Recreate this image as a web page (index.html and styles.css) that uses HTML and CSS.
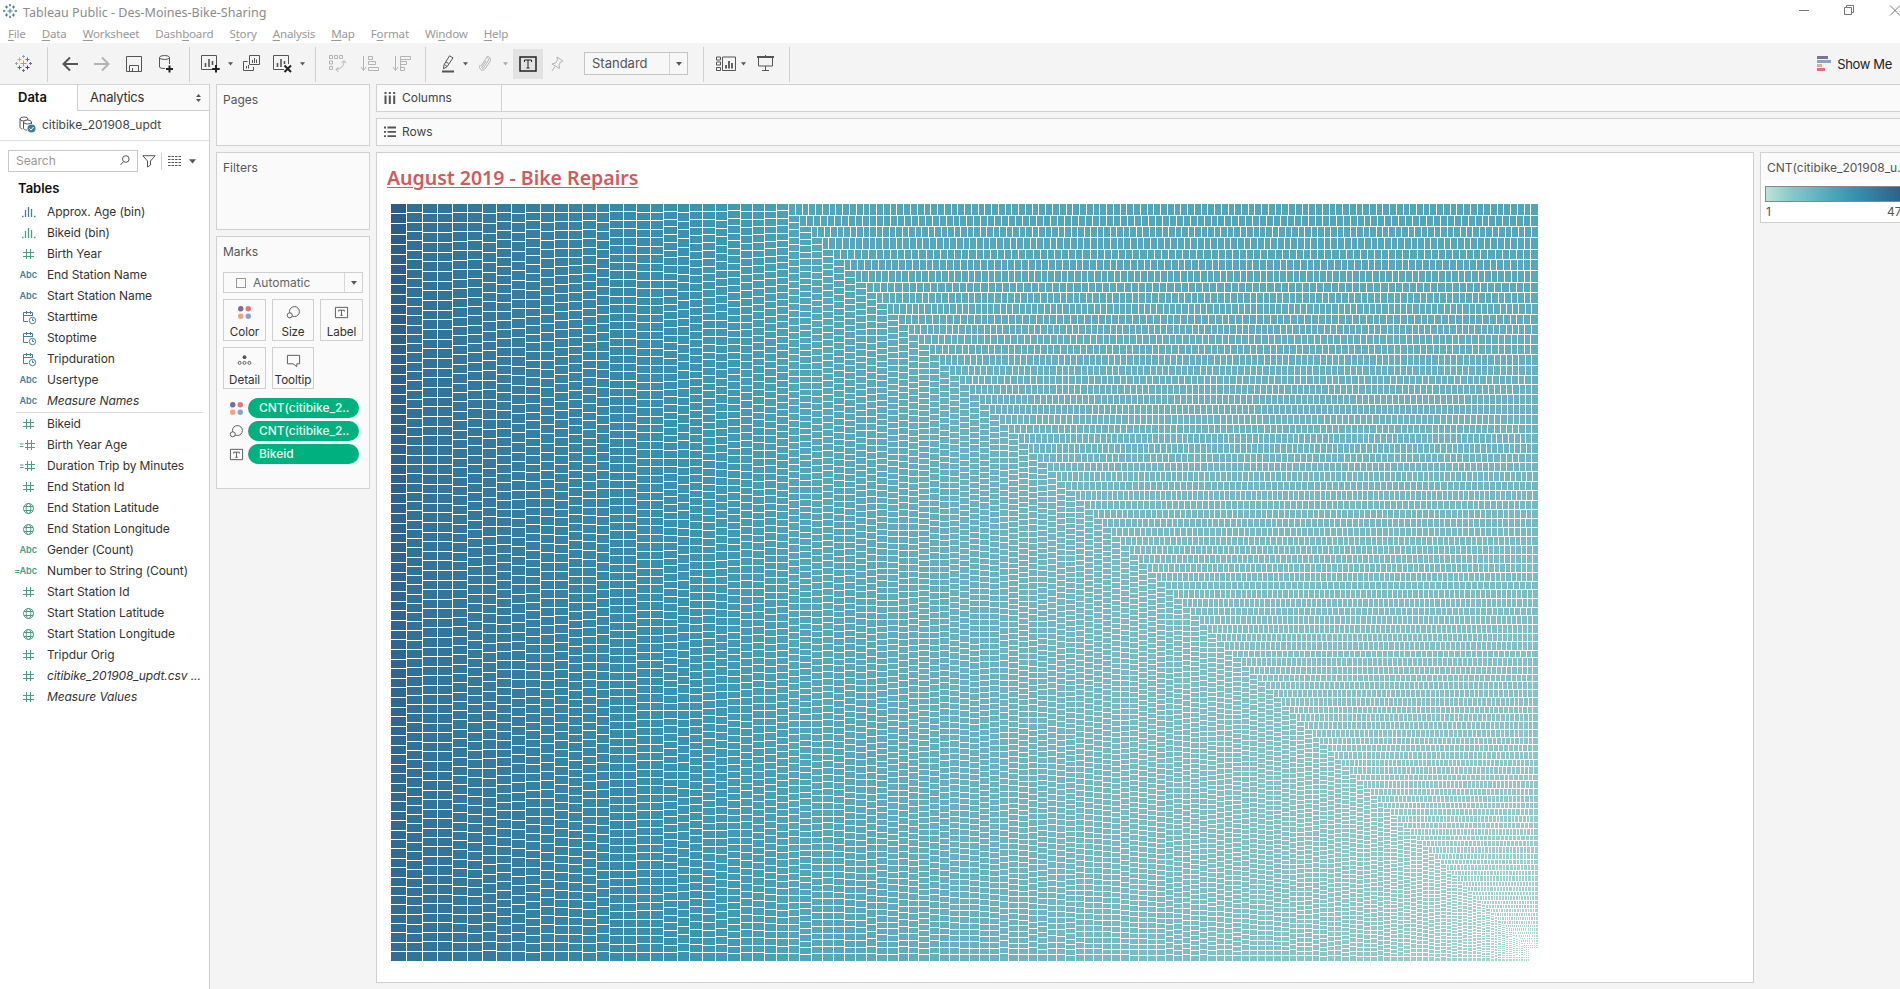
FILE: index.html
```html
<!DOCTYPE html>
<html lang="en">
<head>
<meta charset="utf-8">
<title>Tableau Public - Des-Moines-Bike-Sharing</title>
<link rel="stylesheet" href="styles.css">
</head>
<body>
<svg class="defs" width="0" height="0" aria-hidden="true">
  <symbol id="i-hash" viewBox="0 0 18 14"><path d="M6.500 2v10M10.500 2v10M3 5.500h11M3 9.500h11"/></symbol>
  <symbol id="i-eqhash" viewBox="0 0 18 14"><path d="M7.500 2v10M11.500 2v10M5 5.500h10M5 9.500h10M0 6h3.500M0 8.500h3.500"/></symbol>
  <symbol id="i-bin" viewBox="0 0 18 14"><path d="M5.500 5v7M8.500 2v10M11.500 4v8M2 11.500h1.500M14 11.500h1.500" stroke-width="1.300"/></symbol>
  <symbol id="i-date" viewBox="0 0 18 14"><path d="M8 11.500H3.500v-9h9V6M3.500 5.500h9M6.500 1v3M10.500 1v3"/><circle cx="12.500" cy="10.500" r="3.200"/><path d="M12.500 8.500v2h1.500"/></symbol>
  <symbol id="i-globe" viewBox="0 0 18 14"><circle cx="8.500" cy="7.500" r="5"/><ellipse cx="8.500" cy="7.500" rx="2.300" ry="5"/><path d="M4 5.500h9M4 9.500h9"/></symbol>
  <symbol id="i-caret" viewBox="0 0 6 4"><path d="M0 0h6L3 3.800z" fill="currentColor" stroke="none"/></symbol>
  <symbol id="i-size" viewBox="0 0 16 16"><circle cx="9" cy="7" r="5.300"/><circle cx="4" cy="11" r="2.700" fill="#fafafa"/></symbol>
  <symbol id="i-color" viewBox="0 0 16 16"><g stroke="none"><circle cx="4" cy="4" r="2.900" fill="#7f6a93"/><circle cx="12" cy="4" r="2.900" fill="#e2767d"/><circle cx="4" cy="12" r="2.900" fill="#eda283"/><circle cx="12" cy="12" r="2.900" fill="#8ba2c4"/></g></symbol>
  <symbol id="i-text" viewBox="0 0 16 16"><path d="M1.500 2.500h13v11h-13zM5 7V5.500h6V7M8 5.500v5.500M6.800 11h2.400"/></symbol>
</svg>

<header class="titlebar">
  <svg class="app-icon" width="16" height="16" viewBox="0 0 16 16"><path d="M8 5.500v5M5.500 8h5M4.500 2.500v3M3 4h3M11.500 2.500v3M10 4h3M4.500 10.500v3M3 12h3M11.500 10.500v3M10 12h3M8 1v2.500M7 2h2M8 12.500V15M7 14h2M1 8h2.500M2 7v2M12.500 8H15M14 7v2"/></svg>
  <span class="app-title">Tableau Public - Des-Moines-Bike-Sharing</span>
  <svg class="win" width="112" height="14" viewBox="0 0 112 14"><path d="M11 6.500h10M56.500 3.500h7v7h-7zM58.500 3V1.500h7v7h-2M102 1.500l10 10M112 1.500l-10 10"/></svg>
</header>
<nav class="menu">
  <span><u>F</u>ile</span><span><u>D</u>ata</span><span><u>W</u>orksheet</span><span>Dash<u>b</u>oard</span><span>S<u>t</u>ory</span><span><u>A</u>nalysis</span><span><u>M</u>ap</span><span>F<u>o</u>rmat</span><span>Wi<u>n</u>dow</span><span><u>H</u>elp</span>
</nav>

<div class="toolbar">
  <svg class="ml15" width="17" height="17" viewBox="0 0 17 17"><path d="M8.500 5.500v6M5.500 8.500h6" stroke="#e58b4a"/><path d="M4.500 2.500v4M2.500 4.500h4" stroke="#e0a070"/><path d="M12.500 2.500v4M10.500 4.500h4" stroke="#5b7591"/><path d="M4.500 10.500v4M2.500 12.500h4" stroke="#b8434a"/><path d="M12.500 10.500v4M10.500 12.500h4" stroke="#34456e"/><path d="M8.500 0v3M7 1.500h3M0 8.500h3M1.500 7v3" stroke="#8faab5"/><path d="M8.500 14v3M7 15.500h3M14 8.500h3M15.500 7v3" stroke="#6a6f9b"/></svg>
  <i class="sep ml15"></i>
  <svg class="ml14 heavy" width="16" height="16" viewBox="0 0 16 16"><path d="M16 8H1.500M8 1.500L1.500 8 8 14.500"/></svg>
  <svg class="ml16 heavy dim" width="16" height="16" viewBox="0 0 16 16"><path d="M0 8h14.500M8 1.500L14.500 8 8 14.500"/></svg>
  <svg class="ml16" width="16" height="16" viewBox="0 0 16 16"><path d="M.5.500h15v15H.5zM3.500 15.500v-6h9v6M6.500 12v3.500"/></svg>
  <svg class="ml17" width="14" height="18" viewBox="0 0 14 18"><path d="M6 13.500C3 13.500.5 13 .5 12V2.500M10.500 2.500V9"/><ellipse cx="5.500" cy="2.500" rx="5" ry="2"/><path d="M10.500 10.500v7M7 14h7" stroke="#222" stroke-width="2"/></svg>
  <i class="sep ml16"></i>
  <svg class="ml11" width="19" height="18" viewBox="0 0 19 18"><path d="M12 14.500H.5V.5h15V10"/><path d="M4.500 8v4M8 4v8M11.500 6v4" stroke-width="1.600"/><path d="M15 10v7.500M11.200 14h7.500" stroke="#222" stroke-width="2"/></svg>
  <svg class="caret ml8"><use href="#i-caret"/></svg>
  <svg class="ml10" width="17" height="17" viewBox="0 0 17 17"><path d="M6.500.5h10v9h-10zM4.500 6.500h-4v9h10v-3.500M9.500 5v3M11.500 3v5M13.500 4.500V8M3.500 11v2.500M5.500 10v3.500"/></svg>
  <svg class="ml13" width="19" height="18" viewBox="0 0 19 18"><path d="M11 14.500H.5V.5h15V9"/><path d="M4.500 8v4M8 4v8M11.500 6v3" stroke-width="1.600"/><path d="M11.500 10.500l6.500 6.500M18 10.500L11.500 17" stroke="#222" stroke-width="2"/></svg>
  <svg class="caret ml8"><use href="#i-caret"/></svg>
  <i class="sep ml10"></i>
  <svg class="ml13 dim" width="17" height="17" viewBox="0 0 17 17"><path d="M.5.500h3v3h-3zM5.500.500h3v3h-3zM10.500.500h3v3h-3zM.5 6h3v3h-3zM.5 11.500h3v3h-3zM15 6c0 5-3 8-8 8.500M12.500 8L15 5.500 17 8M9.500 12L7 14.500 9.500 17"/></svg>
  <svg class="ml15 dim" width="18" height="16" viewBox="0 0 18 16"><path d="M2.500 0v14M0 11l2.500 3.500L5 11M7.500.5h4v3h-4zM7.500 5.500h7v3h-7zM7.500 11.500h10v3h-10z"/></svg>
  <svg class="ml14 dim" width="18" height="16" viewBox="0 0 18 16"><path d="M2.500 0v14M0 11l2.500 3.500L5 11M7.500.5h10v3h-10zM7.500 5.500h6v3h-6M7.500 3.500v11h4v-3h-4"/></svg>
  <i class="sep ml14"></i>
  <svg class="ml16" width="12" height="18" viewBox="0 0 12 18"><path d="M7.500.800l3.500 2-6 9-3.500 2 .5-4zM2.500 9.500l2.500 2M4 7l2.500 1.500"/><path d="M0 16.500h12" stroke-width="2"/></svg>
  <svg class="caret ml9"><use href="#i-caret"/></svg>
  <svg class="ml11 dim" width="12" height="16" viewBox="0 0 12 16"><path d="M2 10l5-7.500c1-1.500 3.500-.5 2.500 1.500L4.500 12c-.8 1-2 .3-1.500-1l4-6M1 9C-.5 12 2.500 16.500 6 13l5-7.500C12.500 2 9.500-1 7 1.500"/></svg>
  <svg class="caret ml12 dim"><use href="#i-caret"/></svg>
  <span class="pressed ml5"><svg width="18" height="16" viewBox="0 0 18 16"><path d="M1 1h16v14H1z" stroke="#222" stroke-width="1.500"/><path d="M5.500 6V4h7v2M9 4v8M7.500 12h3" stroke="#222"/></svg></span>
  <svg class="ml8 dim" width="13" height="16" viewBox="0 0 13 16"><path d="M6 1l6 4-1.500 1-1 0-1.500 3 .5 3.500L1 8l3.500-1 2-3zM4 10.500L1 15"/></svg>
  <span class="select ml20"><span>Standard</span><b><svg class="caret"><use href="#i-caret"/></svg></b></span>
  <i class="sep ml15"></i>
  <svg class="ml12" width="20" height="16" viewBox="0 0 20 16"><path d="M.5 1h4v3h-4zM.5 6h4v3h-4zM.5 11.500h4v3h-4zM6.500 1h13v13.500h-13z"/><path d="M10 9v3.500M13 5v7.500M16 7v5.500" stroke-width="1.800"/></svg>
  <svg class="caret ml5"><use href="#i-caret"/></svg>
  <svg class="ml11" width="17" height="17" viewBox="0 0 17 17"><path d="M0 2h17" stroke-width="2"/><path d="M8.500 0v2M1.500 3v8h14V3M8.500 11v5M5 15.500h7"/></svg>
  <i class="sep ml15"></i>
  <div class="showme">
    <svg width="14" height="16" viewBox="0 0 14 16" shape-rendering="crispEdges"><g stroke="none"><path d="M0 0h11v3H0z" fill="#7a7391"/><path d="M0 4h14v3H0z" fill="#8ea3c4"/><path d="M0 8h5v3H0z" fill="#e6a98c"/><path d="M0 12h8v3H0z" fill="#d9727b"/></g></svg>
    <span>Show Me</span>
  </div>
</div>

<main class="work">
  <aside class="pane">
    <div class="tabs"><b>Data</b><span class="tab2">Analytics<svg width="5" height="8" viewBox="0 0 5 8"><path d="M0 3h5L2.500 0zM0 5h5L2.500 8z" fill="#555" stroke="none"/></svg></span></div>
    <div class="source">
      <svg width="17" height="17" viewBox="0 0 17 17"><ellipse cx="5" cy="3" rx="4" ry="2"/><path d="M1 3v8c0 1 1 1.700 2.500 2"/><ellipse cx="8.500" cy="6" rx="4" ry="2" fill="#fff"/><path d="M4.500 6v6c0 1.500 1.500 2 3.500 2.200M12.500 6v2"/><circle cx="12.500" cy="12.500" r="4" fill="#3f7f9d" stroke="none"/><path d="M10.500 12.500l1.500 1.500 2.500-3" stroke="#fff"/></svg>
      <span>citibike_201908_updt</span>
    </div>
    <div class="searchrow">
      <div class="search"><span>Search</span><svg width="10" height="11" viewBox="0 0 10 11"><circle cx="5.800" cy="4" r="3.300"/><path d="M3.500 6.500L.5 10"/></svg></div>
      <svg width="14" height="13" viewBox="0 0 14 13"><path d="M.8.700h12.400L8.500 6v4l-3 2V6z"/></svg>
      <i class="vline"></i>
      <svg width="13" height="10" viewBox="0 0 13 10"><path d="M0 .5h13M0 3.500h13M0 6.500h13M0 9.500h13" stroke-dasharray="2.500 1"/></svg>
      <svg class="caret"><use href="#i-caret"/></svg>
    </div>
    <h2>Tables</h2>
    <ul class="fields dims">
      <li><svg><use href="#i-bin"/></svg><span>Approx. Age (bin)</span></li>
      <li class="green"><svg><use href="#i-bin"/></svg><span>Bikeid (bin)</span></li>
      <li class="green"><svg><use href="#i-hash"/></svg><span>Birth Year</span></li>
      <li><em class="abc">Abc</em><span>End Station Name</span></li>
      <li><em class="abc">Abc</em><span>Start Station Name</span></li>
      <li><svg><use href="#i-date"/></svg><span>Starttime</span></li>
      <li><svg><use href="#i-date"/></svg><span>Stoptime</span></li>
      <li><svg><use href="#i-date"/></svg><span>Tripduration</span></li>
      <li><em class="abc">Abc</em><span>Usertype</span></li>
      <li class="ital"><em class="abc">Abc</em><span>Measure Names</span></li>
    </ul>
    <ul class="fields meas">
      <li><svg><use href="#i-hash"/></svg><span>Bikeid</span></li>
      <li><svg><use href="#i-eqhash"/></svg><span>Birth Year Age</span></li>
      <li><svg><use href="#i-eqhash"/></svg><span>Duration Trip by Minutes</span></li>
      <li><svg><use href="#i-hash"/></svg><span>End Station Id</span></li>
      <li><svg><use href="#i-globe"/></svg><span>End Station Latitude</span></li>
      <li><svg><use href="#i-globe"/></svg><span>End Station Longitude</span></li>
      <li><em class="abc">Abc</em><span>Gender (Count)</span></li>
      <li><em class="abc">=Abc</em><span>Number to String (Count)</span></li>
      <li><svg><use href="#i-hash"/></svg><span>Start Station Id</span></li>
      <li><svg><use href="#i-globe"/></svg><span>Start Station Latitude</span></li>
      <li><svg><use href="#i-globe"/></svg><span>Start Station Longitude</span></li>
      <li><svg><use href="#i-hash"/></svg><span>Tripdur Orig</span></li>
      <li class="ital"><svg><use href="#i-hash"/></svg><span>citibike_201908_updt.csv ...</span></li>
      <li class="ital"><svg><use href="#i-hash"/></svg><span>Measure Values</span></li>
    </ul>
  </aside>

  <section class="cards">
    <div class="card pages">Pages</div>
    <div class="card filters">Filters</div>
    <div class="card marks">Marks
      <div class="marktype"><i></i><span>Automatic</span><b><svg class="caret"><use href="#i-caret"/></svg></b></div>
      <div class="buttons">
        <div><svg><use href="#i-color"/></svg>Color</div>
        <div><svg><use href="#i-size"/></svg>Size</div>
        <div><svg><use href="#i-text"/></svg>Label</div>
        <div><svg viewBox="0 0 16 16"><circle cx="8" cy="4.500" r="2" fill="#555" stroke="none"/><circle cx="2.800" cy="10.500" r="1.600"/><circle cx="8" cy="10.500" r="1.600"/><circle cx="13.200" cy="10.500" r="1.600"/></svg>Detail</div>
        <div><svg viewBox="0 0 16 16"><path d="M1.500 2.500h13v9h-3v3l-4-3h-6z"/></svg>Tooltip</div>
      </div>
      <div class="pill-row"><svg><use href="#i-color"/></svg><span class="pill">CNT(citibike_2..</span></div>
      <div class="pill-row"><svg><use href="#i-size"/></svg><span class="pill">CNT(citibike_2..</span></div>
      <div class="pill-row"><svg><use href="#i-text"/></svg><span class="pill">Bikeid</span></div>
    </div>
  </section>

  <section class="stage">
    <div class="shelf"><div class="shelf-name"><svg width="12" height="12" viewBox="0 0 12 12"><path d="M1.500 0v2M1.500 3.500V12M5.800 0v2M5.800 3.500V12M10.200 0v2M10.200 3.500V12" stroke-width="2"/></svg>Columns</div></div>
    <div class="shelf"><div class="shelf-name"><svg width="12" height="12" viewBox="0 0 12 12"><path d="M0 1.500h2M3.500 1.500H12M0 5.800h2M3.500 5.800H12M0 10.200h2M3.500 10.200H12" stroke-width="1.800"/></svg>Rows</div></div>
    <div class="row">
      <div class="view">
        <h1>August 2019 - Bike Repairs</h1>
        <canvas id="treemap" width="1148" height="757"></canvas>
      </div>
      <div class="legend">
        <p>CNT(citibike_201908_u..</p>
        <div class="ramp"></div>
        <div class="range"><span>1</span><span>470</span></div>
      </div>
    </div>
  </section>
</main>
<script src="treemap.js"></script>
</body>
</html>
```
FILE: styles.css
```css
* { box-sizing: border-box; }
body { margin: 0; width: 1900px; height: 989px; overflow: hidden; display: flex; flex-direction: column; background: #f4f4f4; font: 12px/16px Inter, "Open Sans", sans-serif; color: #333; }
svg { fill: none; stroke: #555; flex: none; color: #555; overflow: visible; }
symbol { overflow: visible; }
.defs { position: absolute; }
ul, h1, h2, p { margin: 0; padding: 0; list-style: none; }

.titlebar { height: 24px; flex: none; background: #fff; display: flex; align-items: center; padding-left: 2px; font-family: "Noto Sans", sans-serif; font-size: 12.550px; color: #8c8c8c; }
.app-icon { stroke: #3d7d94; margin-bottom: 2px; }
.app-title { margin-left: 5px; padding-top: 2px; }
.win { margin-left: auto; margin-right: 0; margin-bottom: 3px; stroke: #777; }

.menu { height: 19px; flex: none; background: #fff; display: flex; gap: 16.100px; padding: 1px 0 0 8px; font-family: "Noto Sans", sans-serif; font-size: 11.600px; line-height: 17px; color: #999; letter-spacing: -.22px; }
.menu u { text-underline-offset: 2px; }

.toolbar { height: 41px; flex: none; display: flex; align-items: center; }
.toolbar .sep { width: 1px; height: 35px; background: #cfcfcf; margin-top: 2px; }
.heavy { stroke-width: 2; }
.dim { stroke: #b3b3b3; color: #aaa; }
svg.caret { width: 5px; height: 4px; }
.ml5 { margin-left: 5px; } .ml8 { margin-left: 8px; } .ml9 { margin-left: 9px; } .ml10 { margin-left: 10px; }
.ml11 { margin-left: 11px; } .ml12 { margin-left: 12px; } .ml13 { margin-left: 13px; } .ml14 { margin-left: 14px; }
.toolbar .ml15 { margin-left: 15px; } .ml16 { margin-left: 16px; } .ml17 { margin-left: 17px; } .ml20 { margin-left: 20px; }
.pressed { width: 30px; height: 30px; background: #e2e2e2; display: grid; place-items: center; }
.select { width: 104px; height: 23px; border: 1px solid #c4c4c4; display: flex; justify-content: space-between; padding-left: 7px; font-size: 13px; line-height: 21px; color: #555; background: #f7f7f7; }
.select b { width: 18px; border-left: 1px solid #d4d4d4; display: grid; place-items: center; }
.select .caret, .marktype .caret { width: 6px; }
.showme { margin-left: auto; margin-right: 8px; display: flex; gap: 6px; align-items: center; font-size: 13px; letter-spacing: -.35px; color: #222; }

.work { flex: 1; display: flex; min-height: 0; }
.pane { width: 210px; flex: none; background: #fff; border-right: 1px solid #cfcfcf; border-top: 1px solid #d4d4d4; }
.tabs { display: flex; height: 26px; font-size: 13px; line-height: 25px; color: #111; }
.tabs b { width: 77px; padding-left: 18px; font-weight: 600; }
.tab2 { flex: 1; background: #fafafa; border-left: 1px solid #cfcfcf; border-bottom: 1px solid #cfcfcf; padding: 0 8px 0 12px; display: flex; justify-content: space-between; align-items: center; color: #333; letter-spacing: -.25px; }
.source { height: 30px; display: flex; align-items: center; gap: 6px; padding: 0 0 2px 19px; border-bottom: 1px solid #e0e0e0; color: #444; }
.searchrow { display: flex; align-items: center; height: 22px; margin: 9px 0 0 8px; }
.search { width: 130px; height: 22px; border: 1px solid #c8c8c8; padding: 0 7px 1px; display: flex; justify-content: space-between; align-items: center; color: #999; margin-right: 4px; }
.vline { width: 1px; height: 17px; background: #d0d0d0; margin: 0 6px 0 5px; }
.searchrow .caret { width: 7px; height: 5px; margin-left: 8px; }
h2 { font-size: 13px; font-weight: 600; line-height: 16px; color: #111; margin: 8px 0 5px 18px; }
.fields { margin: 0 6px 0 16px; }
.fields li { height: 21px; display: flex; align-items: center; white-space: nowrap; color: #333; font-size: 12px; letter-spacing: -.09px; }
.fields li > svg { width: 18px; height: 14px; margin-left: 4px; margin-right: 9px; }
.fields svg, .abc { stroke: #4a7f99; color: #4a7f99; }
.green svg, .meas svg, .meas .abc { stroke: #4b9e86; color: #4b9e86; }
.abc { width: 31px; padding-right: 10px; font: 600 9.200px/14px Inter, sans-serif; display: flex; justify-content: flex-end; }
.dims { border-bottom: 1px solid #ddd; height: 212px; }
.ital span { font-style: italic; }

.cards { width: 154px; margin-left: 6px; flex: none; display: flex; flex-direction: column; gap: 6px; }
.card { border: 1px solid #d0d0d0; background: #fafafa; padding: 7px 6px 0; color: #555; }
.pages { height: 62px; } .filters { height: 78px; } .marks { height: 253px; }
.marktype { margin-top: 12px; width: 140px; height: 21px; border: 1px solid #cfcfcf; display: flex; align-items: center; color: #666; }
.marktype i { width: 10px; height: 10px; border: 1px solid #999; margin: 0 7px 0 12px; }
.marktype b { width: 18px; height: 19px; margin-left: auto; border-left: 1px solid #d8d8d8; display: grid; place-items: center; }
.buttons { display: grid; grid-template-columns: 43px 42px 43px; gap: 6px; margin: 6px 0 9px; }
.buttons div { height: 42px; border: 1px solid #cfcfcf; display: flex; flex-direction: column; align-items: center; padding-top: 5px; gap: 4px; font-size: 11.700px; line-height: 16px; color: #333; letter-spacing: -.1px; }
.buttons svg, .pill-row svg { width: 15px; height: 15px; }
.pill-row { display: flex; align-items: center; gap: 4px; margin-bottom: 3px; height: 20px; padding-left: 6px; }
.pill { width: 111px; height: 20px; border-radius: 10px; background: #00b180; color: #e8f8f2; line-height: 20px; padding-left: 11px; font-weight: 500; letter-spacing: -.05px; }

.stage { flex: 1; margin-left: 6px; min-width: 0; display: flex; flex-direction: column; gap: 6px; }
.shelf { height: 28px; flex: none; border: 1px solid #d0d0d0; border-right: 0; background: #fafafa; }
.shelf-name { width: 125px; height: 26px; border-right: 1px solid #d0d0d0; display: flex; align-items: center; gap: 6px; padding-left: 7px; color: #444; }
.row { display: flex; gap: 6px; align-items: flex-start; }
.view { width: 1378px; height: 831px; flex: none; background: #fff; border: 1px solid #d0d0d0; padding: 13px 14px 0; }
h1 { font-family: "Noto Sans", sans-serif; font-size: 19.500px; font-weight: 600; line-height: 24px; color: #cd5c60; text-decoration: underline; text-decoration-thickness: 1px; text-underline-offset: 2px; margin: 0 0 14px -4px; white-space: nowrap; }
canvas { display: block; }
.legend { width: 160px; height: 71px; background: #fff; border: 1px solid #d0d0d0; white-space: nowrap; color: #555; }
.legend p { background: #fafafa; height: 27px; line-height: 30px; padding-left: 6px; }
.ramp { height: 16px; margin: 6px 0 0 4px; border: 1px solid #888; background: linear-gradient(90deg, #bce4d8, #89c8cc 25px, #4ba5ba 68px, #358ead 92px, #2c5985 142px); }
.range { display: flex; gap: 116px; padding: 2px 0 0 5px; }
```
FILE: treemap.js
```js
const ctx = document.getElementById('treemap').getContext('2d');
const OX = 391, OY = 204, W = 1147, H = 757;

const palette = ['#b4dcd3', '#aad6d1', '#a0d0cf', '#96cacb', '#8bc4c8', '#81bec6', '#76b8c3',
  '#6bb0bf', '#5eabbb', '#50a4b8', '#449db4', '#3d95b0', '#388eab', '#3786a6', '#367ea0',
  '#34779a', '#326f95', '#30678f', '#2e608a', '#2c5985'];

function shade(value) {
  const t = Math.max(0, Math.min(0.999, value)) * (palette.length - 1);
  const i = Math.floor(t), f = t - i;
  const rgb = n => [1, 3, 5].map(k => parseInt(palette[n].slice(k, k + 2), 16));
  const a = rgb(i), b = rgb(i + 1);
  return 'rgb(' + a.map((v, k) => Math.round(v + (b[k] - v) * f)).join(',') + ')';
}

function cell(x1, y1, x2, y2, value) {
  const x = Math.round(x1), y = Math.round(y1);
  const w = Math.round(x2) - x - (x2 >= W ? 0 : 1), h = Math.round(y2) - y - (y2 >= H ? 0 : 1);
  if (w > 0 && h > 0) {
    ctx.fillStyle = shade(value);
    ctx.fillRect(x, y, w, h);
  }
}

/* Fill one strip with cells of about `area`, shrinking by `slope` along it. */
function strip(x, y, w, h, vertical, area, slope, v0, v1) {
  const len = vertical ? h : w, thick = vertical ? w : h;
  if (len <= 0 || thick <= 0) return;
  const n = Math.max(1, Math.round(len * thick / area));
  const pitch = len / n;
  let p = 0;
  for (let i = 0; i < n; i++) {
    const q = i === n - 1 ? len : p + pitch * (1 + slope * (0.5 - (i + 0.5) / n));
    const v = v0 + (v1 - v0) * i / n;
    if (vertical) cell(x, y + p, x + w, y + q, v);
    else cell(x + p, y, x + q, y + h, v);
    p = q;
  }
}

const at = (base, list) => list.map(v => base + v / 3);

const lead = at(380, [33, 79.5, 127.5, 173, 218, 263, 308, 350, 395, 437, 482, 524, 566, 608, 650,
  689, 731, 772, 812, 851, 893, 929, 968, 1007, 1043, 1082, 1118, 1154, 1190, 1226]).map(v => v - OX);

const xs = [
  ...at(760, [87, 119, 155, 188, 221, 254, 287, 320, 350, 383, 416, 446, 476]),
  ...at(905, [74, 104, 134, 164, 194, 224, 254, 284, 311, 341, 371, 398, 428, 455, 482]),
  ...at(1065, [32, 59, 86, 113, 140, 167, 194, 221, 248, 275, 302, 326, 353, 377, 404, 428, 455, 479, 503]),
  ...at(1225, [50, 74, 98, 122, 146, 170, 194, 215, 239, 263, 284, 308, 329, 350, 374, 395, 416, 437, 458, 476, 497]),
  ...at(1380, [54, 72, 93, 111, 129, 147, 165, 183, 200, 216, 234, 249, 264, 278, 291, 305, 319, 332, 344, 354, 366, 377])
].map(v => v - OX);
const ys = [
  ...at(190, [42, 76.5, 110, 145, 179, 211, 244, 277.5, 308, 340.5, 374, 404, 436]),
  ...at(330, [46, 76, 107, 137, 166, 196, 226, 256, 285, 313, 343, 373, 400, 427, 457]),
  ...at(490, [4, 34, 61, 88, 115, 142, 169, 196, 223, 250, 277, 301, 328, 355, 379, 405, 431, 457, 482]),
  ...at(650, [25, 50, 74, 97, 121, 145, 170, 193, 217, 240, 263, 286, 307, 329, 352, 374, 394, 416, 437, 458, 478]),
  ...at(800, [47, 68, 86, 107, 124, 142, 161, 179, 196, 212, 229, 245, 261, 275, 289, 303, 316, 328, 340, 352, 364, 374])
].map(v => v - OY);

/* Tail strips taper off into the corner. */
let step = 3.6;
while (step > 1.2 && xs[xs.length - 1] + step < W - 6) {
  xs.push(xs[xs.length - 1] + step);
  ys.push(ys[ys.length - 1] + step);
  step *= 0.93;
}

/* Leading full-height columns. */
for (let i = 0; i < lead.length - 1; i++) {
  const v = k => 0.83 - 0.34 * (k - 1) / 28;
  strip(lead[i], 0, lead[i + 1] - lead[i], H, true, 150 - 2.25 * i, i === 0 ? 0.1 : 0.03,
    i === 0 ? 0.98 : v(i), i === 0 ? 0.85 : v(i + 1));
}

/* Alternating rows and columns along the diagonal. */
function meanThickness(k) {
  const a = Math.max(0, k - 5), b = Math.min(xs.length - 1, k + 6);
  return (xs[b] - xs[a] + ys[b] - ys[a]) / (2 * (b - a));
}
for (let k = 0; k < xs.length - 1; k++) {
  const m = meanThickness(k), area = m * m / 1.6, v = area / 168;
  strip(xs[k], ys[k], W - xs[k], ys[k + 1] - ys[k], false, area, 0.01, v, v);
  strip(xs[k], ys[k + 1], xs[k + 1] - xs[k], H - ys[k + 1], true, area, 0.01, v, v);
}
```
